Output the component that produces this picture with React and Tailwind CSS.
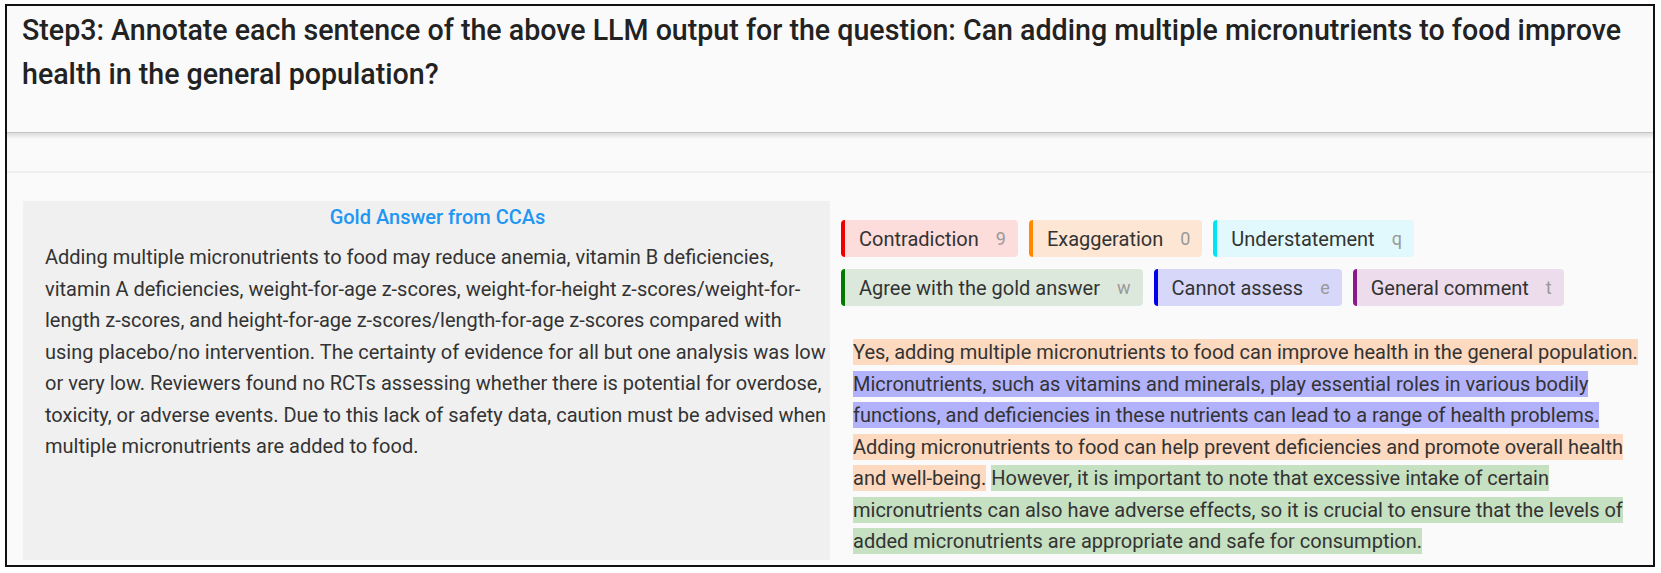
import React from 'react';

const labels = [
  { name: 'Contradiction', key: '9', bar: 'border-[#ee0000]', bg: 'bg-[#fddcdc]' },
  { name: 'Exaggeration', key: '0', bar: 'border-[#ff8a00]', bg: 'bg-[#fde6d4]' },
  { name: 'Understatement', key: 'q', bar: 'border-[#00e5f5]', bg: 'bg-[#e1f9fc]' },
  { name: 'Agree with the gold answer', key: 'w', bar: 'border-[#007a00]', bg: 'bg-[#dde8dc]' },
  { name: 'Cannot assess', key: 'e', bar: 'border-[#0000ee]', bg: 'bg-[#d7d7fa]' },
  { name: 'General comment', key: 't', bar: 'border-[#8a1a8a]', bg: 'bg-[#ecdcec]' },
];

const sentences = [
  { text: 'Yes, adding multiple micronutrients to food can improve health in the general population.', bg: 'bg-[#fdd9bf]' },
  { text: 'Micronutrients, such as vitamins and minerals, play essential roles in various bodily functions, and deficiencies in these nutrients can lead to a range of health problems.', bg: 'bg-[#b1b1fc]' },
  { text: 'Adding micronutrients to food can help prevent deficiencies and promote overall health and well-being.', bg: 'bg-[#fdd9bf]' },
  { text: 'However, it is important to note that excessive intake of certain micronutrients can also have adverse effects, so it is crucial to ensure that the levels of added micronutrients are appropriate and safe for consumption.', bg: 'bg-[#c6e0c2]' },
];

function Label({ label }) {
  return (
    <div
      className={`flex h-[37px] items-center rounded-[4px] border-l-4 pl-[14px] pr-[12px] ${label.bar} ${label.bg}`}
    >
      <span className="text-[20px] text-[#333]">{label.name}</span>
      <span className="ml-[17px] text-[18px] text-[#999]">{label.key}</span>
    </div>
  );
}

export default function App() {
  return (
    <div className="h-[573px] w-[1661px] bg-white pl-[5px] pt-[4px] [font-family:Roboto,sans-serif]">
      <div className="h-[563px] w-[1650px] overflow-hidden border-2 border-[#111] bg-[#fafafa]">
        {/* question header */}
        <div className="h-[126px] pl-[15px] pr-[10px] pt-[2px]">
          <h1 className="text-[28.6px] font-medium leading-[44px] text-[#222]">
            Step3: Annotate each sentence of the above LLM output for the question: Can adding multiple
            micronutrients to food improve health in the general population?
          </h1>
        </div>
        <div className="h-px bg-[#c4c4c4]" />
        <div className="h-[6px] bg-gradient-to-b from-[#dcdcdc] to-[#fafafa]" />
        <div className="h-[32px]" />
        <div className="h-[2px] bg-[#efefef]" />

        <div className="flex gap-[11px] pl-[16px] pt-[28px]">
          {/* gold answer */}
          <div className="h-[359px] w-[807px] shrink-0 bg-[#f0f0f0] pl-[22px] pt-[4px]">
            <div className="text-center text-[20px] font-medium leading-[24px] text-[#2196f3]">
              Gold Answer from CCAs
            </div>
            <p className="mt-[13px] w-[788px] text-[20px] leading-[31.5px] text-[#333]">
              Adding multiple micronutrients to food may reduce anemia, vitamin B deficiencies, vitamin A
              deficiencies, weight-for-age z-scores, weight-for-height z-scores/weight-for-length z-scores,
              and height-for-age z-scores/length-for-age z-scores compared with using placebo/no
              intervention. The certainty of evidence for all but one analysis was low or very low.
              Reviewers found no RCTs assessing whether there is potential for overdose, toxicity, or
              adverse events. Due to this lack of safety data, caution must be advised when multiple
              micronutrients are added to food.
            </p>
          </div>

          {/* annotation side */}
          <div className="w-[812px] pt-[19px]">
            <div className="flex flex-wrap gap-x-[11px] gap-y-[12px]">
              {labels.map((l) => (
                <Label key={l.name} label={l} />
              ))}
            </div>
            <p className="mt-[31px] w-[806px] pl-[12px] text-[20px] leading-[31.5px] text-[#333]">
              {sentences.map((s, i) => (
                <React.Fragment key={i}>
                  <span className={`${s.bg} py-px`}>{s.text}</span>
                  {i < sentences.length - 1 ? ' ' : null}
                </React.Fragment>
              ))}
            </p>
          </div>
        </div>
      </div>
    </div>
  );
}
